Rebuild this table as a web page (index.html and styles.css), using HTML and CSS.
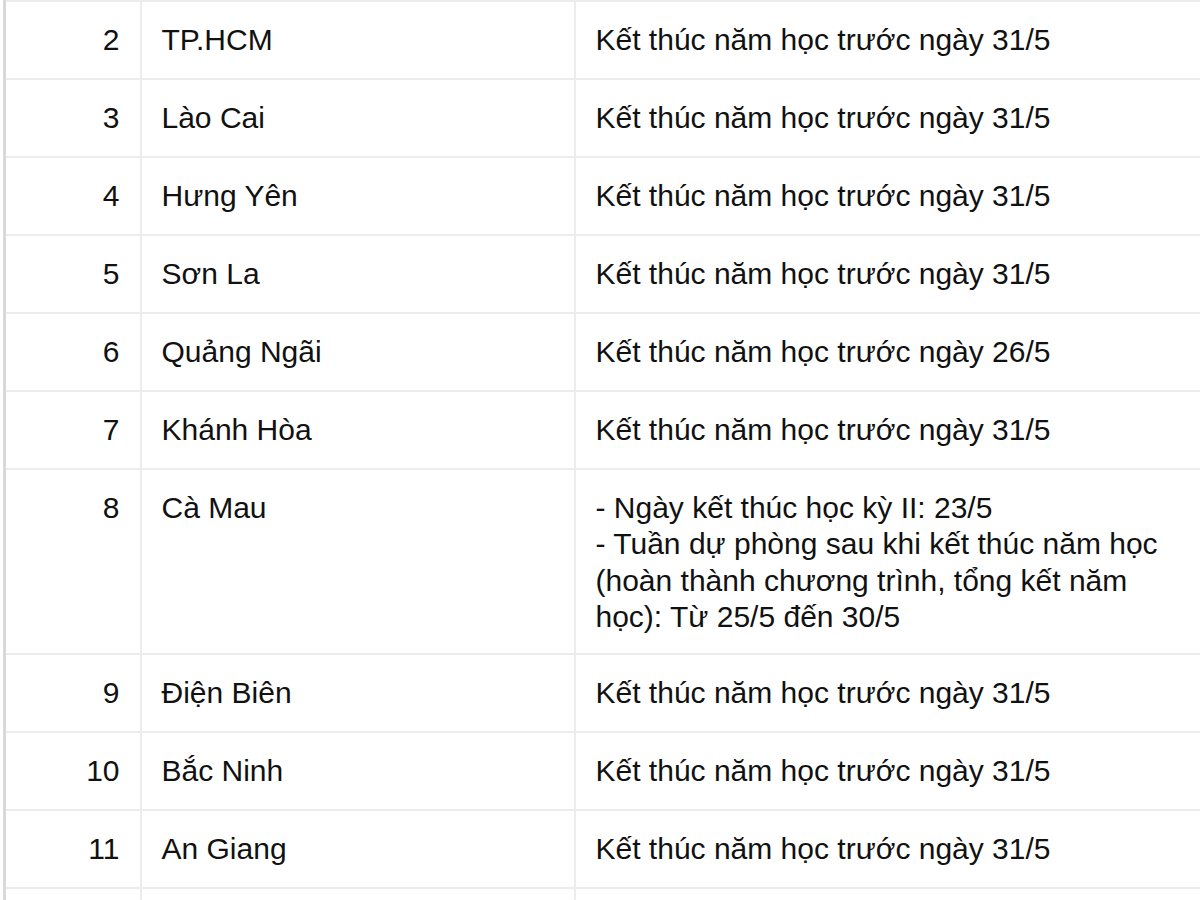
FILE: index.html
```html
<!DOCTYPE html>
<html lang="vi">
<head>
<meta charset="utf-8">
<link rel="stylesheet" href="styles.css">
</head>
<body>
<table class="schedule">
  <colgroup>
    <col class="c-num">
    <col class="c-name">
    <col class="c-note">
  </colgroup>
  <tbody>
    <tr><td class="num">2</td><td>TP.HCM</td><td>Kết thúc năm học trước ngày 31/5</td></tr>
    <tr><td class="num">3</td><td>Lào Cai</td><td>Kết thúc năm học trước ngày 31/5</td></tr>
    <tr><td class="num">4</td><td>Hưng Yên</td><td>Kết thúc năm học trước ngày 31/5</td></tr>
    <tr><td class="num">5</td><td>Sơn La</td><td>Kết thúc năm học trước ngày 31/5</td></tr>
    <tr><td class="num">6</td><td>Quảng Ngãi</td><td>Kết thúc năm học trước ngày 26/5</td></tr>
    <tr><td class="num">7</td><td>Khánh Hòa</td><td>Kết thúc năm học trước ngày 31/5</td></tr>
    <tr><td class="num">8</td><td>Cà Mau</td><td class="multi">- Ngày kết thúc học kỳ II: 23/5<br>- Tuần dự phòng sau khi kết thúc năm học (hoàn thành chương trình, tổng kết năm học): Từ 25/5 đến 30/5</td></tr>
    <tr><td class="num">9</td><td>Điện Biên</td><td>Kết thúc năm học trước ngày 31/5</td></tr>
    <tr><td class="num">10</td><td>Bắc Ninh</td><td>Kết thúc năm học trước ngày 31/5</td></tr>
    <tr><td class="num">11</td><td>An Giang</td><td>Kết thúc năm học trước ngày 31/5</td></tr>
    <tr class="partial"><td class="num"></td><td></td><td></td></tr>
  </tbody>
</table>
</body>
</html>
```
FILE: styles.css
```css
html, body {
  margin: 0;
  padding: 0;
  background: #ffffff;
  overflow: hidden;
}
body {
  width: 1200px;
  height: 900px;
  font-family: "Liberation Sans", Arial, Helvetica, sans-serif;
  color: #111111;
}
.schedule {
  margin-left: 3px;
  border-collapse: collapse;
  table-layout: fixed;
  width: 1200px;
  font-size: 30px;
  line-height: 35.67px;
}
.c-num { width: 136px; }
.c-name { width: 434px; }
.c-note { width: 630px; }
.schedule td {
  border: 2px solid #ececec;
  padding: 20.17px 20px 20.17px 20px;
  vertical-align: top;
  text-align: left;
}
.schedule td.multi {
  line-height: 36.3px;
  padding-bottom: 18px;
}
.schedule tr td:first-child {
  border-left: 3px solid #d9d9d9;
}
.schedule td.num {
  text-align: right;
  padding-right: 20px;
}
.schedule tr.partial td {
  height: 60px;
}
```
